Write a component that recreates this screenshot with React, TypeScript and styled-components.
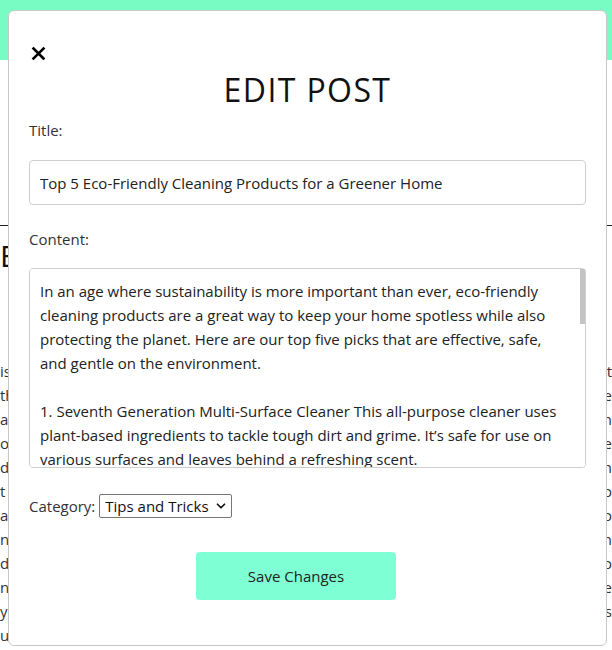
import React from "react";
import styled, { createGlobalStyle } from "styled-components";
import { ChevronDown } from "lucide-react";

const GlobalStyle = createGlobalStyle`
  html, body { margin: 0; padding: 0; background: #ffffff; }
  body { font-family: "Open Sans", "Noto Sans", sans-serif; color: #222; }
  * { box-sizing: border-box; }
`;

const Page = styled.div`
  position: relative;
  width: 612px;
  height: 650px;
  overflow: hidden;
  background: #fff;
`;

const HeaderBand = styled.header`
  height: 60px;
  background: #78fcc3;
`;

const BgMain = styled.main`
  padding-top: 165px;
  font-family: "Open Sans", sans-serif;
  font-size: 15px;
  color: #333;
`;

const BgRule = styled.hr`
  margin: 0;
  border: none;
  border-top: 1px solid #222;
`;

const BgHeadingRow = styled.div`
  display: flex;
  justify-content: space-between;
  align-items: center;
  margin-top: 18px;
  height: 24px;
`;

const BgHeading = styled.h2`
  margin: 0;
  font-size: 30px;
  font-weight: 400;
  line-height: 24px;
  color: #111;
  white-space: nowrap;
`;

const BgMarker = styled.span`
  width: 6px;
  height: 18px;
  border-left: 1px solid #3fa8b8;
`;

const BgParagraph = styled.div`
  margin-top: 91px;
`;

const BgLine = styled.div`
  display: flex;
  height: 24px;
  line-height: 24px;
  white-space: nowrap;
`;

const BgLeft = styled.span`
  flex: 1 1 auto;
  overflow: hidden;
`;

const BgRight = styled.span`
  flex: 0 0 5px;
  overflow: visible;
`;

const Modal = styled.div`
  position: absolute;
  left: 8px;
  top: 10px;
  width: 599px;
  height: 636px;
  background: #fff;
  border: 1px solid #c8c8c8;
  border-radius: 6px;
  padding: 0 20px;
  display: flex;
  flex-direction: column;
`;

const CloseButton = styled.button`
  align-self: flex-start;
  margin: 30px 0 0 2px;
  padding: 0;
  border: none;
  background: none;
  height: 24px;
  width: 20px;
  display: flex;
  align-items: center;
  justify-content: flex-start;
  cursor: pointer;
  color: #000;
`;

const Heading = styled.h1`
  margin: 5px 0 0 0;
  height: 40px;
  line-height: 40px;
  text-align: center;
  font-family: "Open Sans", sans-serif;
  font-weight: 400;
  font-size: 32px;
  letter-spacing: 1.4px;
  color: #111;
`;

const Label = styled.label<{ $top: number }>`
  display: block;
  margin-top: ${(p) => p.$top}px;
  font-size: 15px;
  line-height: 20px;
  color: #333;
`;

const TextInput = styled.input`
  margin-top: 20px;
  width: 100%;
  height: 45px;
  padding: 0 10px;
  border: 1px solid #cfcfcf;
  border-radius: 4px;
  font-family: "Open Sans", sans-serif;
  font-size: 15px;
  color: #222;
  outline: none;
`;

const AreaWrap = styled.div`
  position: relative;
  margin-top: 19px;
  height: 200px;
`;

const TextArea = styled.textarea`
  display: block;
  width: 100%;
  height: 200px;
  padding: 10px 15px 10px 10px;
  border: 1px solid #cfcfcf;
  border-radius: 4px;
  font-family: "Open Sans", sans-serif;
  font-size: 15px;
  line-height: 24px;
  color: #222;
  resize: none;
  outline: none;
  scrollbar-width: none;
  &::-webkit-scrollbar { display: none; }
`;

const ScrollThumb = styled.span`
  position: absolute;
  top: 1px;
  right: 1px;
  width: 5px;
  height: 55px;
  background: #c4c4c4;
  pointer-events: none;
`;

const CategoryRow = styled.div`
  margin-top: 26px;
  display: flex;
  align-items: center;
  height: 24px;
  gap: 4px;
  font-size: 15px;
  color: #333;
`;

const SelectWrap = styled.div`
  position: relative;
  display: inline-flex;
`;

const Select = styled.select`
  appearance: none;
  height: 24px;
  width: 133px;
  padding: 0 18px 0 5px;
  border: 1px solid #767676;
  border-radius: 2px;
  background: #fff;
  font-family: "Open Sans", sans-serif;
  font-size: 15px;
  color: #111;
`;

const SelectArrow = styled.span`
  position: absolute;
  right: 4px;
  top: 5px;
  pointer-events: none;
  display: flex;
  color: #111;
`;

const SaveButton = styled.button`
  margin: 34px 0 0 167px;
  width: 200px;
  height: 48px;
  border: none;
  border-radius: 4px;
  background: #7fffd4;
  font-family: "Open Sans", sans-serif;
  font-size: 15px;
  color: #222;
  cursor: pointer;
`;

const content = `In an age where sustainability is more important than ever, eco-friendly cleaning products are a great way to keep your home spotless while also protecting the planet. Here are our top five picks that are effective, safe, and gentle on the environment.

1. Seventh Generation Multi-Surface Cleaner This all-purpose cleaner uses plant-based ingredients to tackle tough dirt and grime. It’s safe for use on various surfaces and leaves behind a refreshing scent.

2. Method All-Purpose Cleaner Method’s biodegradable formula comes in a bottle made from recycled plastic, and it cuts through grease without harsh chemicals.

3. Mrs. Meyer’s Clean Day Multi-Surface Everyday Cleaner Made with essential oils and plant-derived ingredients, this cleaner is tough on messes and gentle on your home.

4. Ecover Dishwasher Tablets These plant-based tablets get dishes sparkling clean while being kind to waterways and aquatic life.

5. Branch Basics Concentrate One concentrate, many uses: dilute it for everything from countertops to laundry and cut down on plastic waste.

Switching to greener cleaning products is a small step that makes a big difference for your family and the planet.`;

const bgLines: [string, string][] = [
  ["is", "ut"],
  ["th", "he"],
  ["ac", "an"],
  ["ou", "Ve"],
  ["da", "th"],
  ["t a", "fo"],
  ["ar", "to"],
  ["ne", "in"],
  ["de", "Ho"],
  ["nc", "ne"],
  ["y o", "(s"],
  ["us", ""],
];

export default function App() {
  return (
    <Page>
      <GlobalStyle />
      <HeaderBand />
      <BgMain>
        <BgRule />
        <BgHeadingRow>
          <BgHeading>E</BgHeading>
          <BgMarker />
        </BgHeadingRow>
        <BgParagraph>
          {bgLines.map(([l, r], i) => (
            <BgLine key={i}>
              <BgLeft>{l}</BgLeft>
              <BgRight>{r}</BgRight>
            </BgLine>
          ))}
        </BgParagraph>
      </BgMain>

      <Modal>
        <CloseButton aria-label="Close">
          <svg width="15" height="15" viewBox="0 0 15 15">
            <path d="M2.5 2.5 L12.5 12.5 M12.5 2.5 L2.5 12.5" stroke="#000" strokeWidth="2.6" strokeLinecap="square" />
          </svg>
        </CloseButton>
        <Heading>EDIT POST</Heading>
        <Label $top={10} htmlFor="title">Title:</Label>
        <TextInput id="title" defaultValue="Top 5 Eco-Friendly Cleaning Products for a Greener Home" />
        <Label $top={24} htmlFor="content">Content:</Label>
        <AreaWrap>
          <TextArea id="content" defaultValue={content} />
          <ScrollThumb />
        </AreaWrap>
        <CategoryRow>
          <label htmlFor="category">Category:</label>
          <SelectWrap>
            <Select id="category" defaultValue="Tips and Tricks">
              <option>Tips and Tricks</option>
              <option>Product Reviews</option>
              <option>News</option>
            </Select>
            <SelectArrow>
              <ChevronDown size={14} strokeWidth={3} />
            </SelectArrow>
          </SelectWrap>
        </CategoryRow>
        <SaveButton>Save Changes</SaveButton>
      </Modal>
    </Page>
  );
}
